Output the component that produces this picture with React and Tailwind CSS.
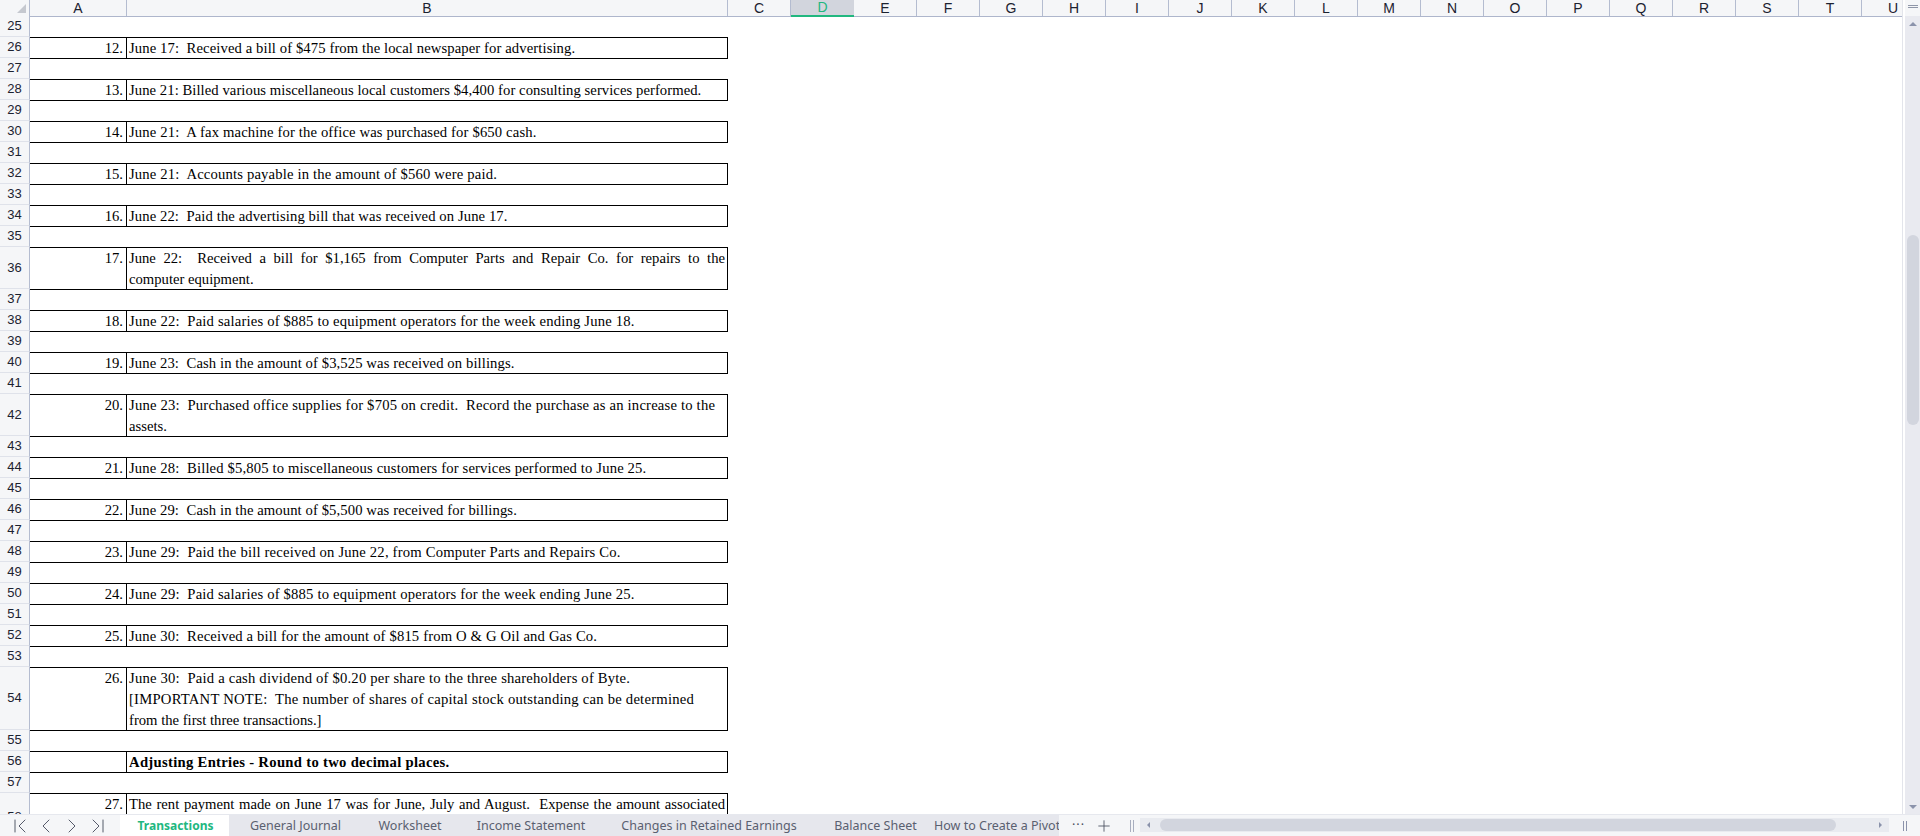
import { ChevronFirst, ChevronLast, ChevronLeft, ChevronRight, Plus } from 'lucide-react';

const columns = ['C', 'D', 'E', 'F', 'G', 'H', 'I', 'J', 'K', 'L', 'M', 'N', 'O', 'P', 'Q', 'R', 'S', 'T', 'U'];

// each line: [text, tracking class]
const entries = [
  { row: 26, num: '12.', lines: [['June 17:  Received a bill of $475 from the local newspaper for advertising.', 'tracking-[0.1px]']] },
  { row: 28, num: '13.', lines: [['June 21: Billed various miscellaneous local customers $4,400 for consulting services performed.', 'tracking-[0.065px]']] },
  { row: 30, num: '14.', lines: [['June 21:  A fax machine for the office was purchased for $650 cash.', 'tracking-[0.146px]']] },
  { row: 32, num: '15.', lines: [['June 21:  Accounts payable in the amount of $560 were paid.', 'tracking-[0.166px]']] },
  { row: 34, num: '16.', lines: [['June 22:  Paid the advertising bill that was received on June 17.', 'tracking-[0.094px]']] },
  { row: 36, num: '17.', justify: true, lines: [['June 22:  Received a bill for $1,165 from Computer Parts and Repair Co. for repairs to the', ''], ['computer equipment.', '']] },
  { row: 38, num: '18.', lines: [['June 22:  Paid salaries of $885 to equipment operators for the week ending June 18.', 'tracking-[0.177px]']] },
  { row: 40, num: '19.', lines: [['June 23:  Cash in the amount of $3,525 was received on billings.', 'tracking-[0.095px]']] },
  { row: 42, num: '20.', lines: [['June 23:  Purchased office supplies for $705 on credit.  Record the purchase as an increase to the', 'tracking-[0.19px]'], ['assets.', '']] },
  { row: 44, num: '21.', lines: [['June 28:  Billed $5,805 to miscellaneous customers for services performed to June 25.', 'tracking-[0.144px]']] },
  { row: 46, num: '22.', lines: [['June 29:  Cash in the amount of $5,500 was received for billings.', 'tracking-[0.094px]']] },
  { row: 48, num: '23.', lines: [['June 29:  Paid the bill received on June 22, from Computer Parts and Repairs Co.', 'tracking-[0.186px]']] },
  { row: 50, num: '24.', lines: [['June 29:  Paid salaries of $885 to equipment operators for the week ending June 25.', 'tracking-[0.177px]']] },
  { row: 52, num: '25.', lines: [['June 30:  Received a bill for the amount of $815 from O & G Oil and Gas Co.', 'tracking-[0.147px]']] },
  { row: 54, num: '26.', lines: [['June 30:  Paid a cash dividend of $0.20 per share to the three shareholders of Byte.', 'tracking-[0.19px]'], ['[IMPORTANT NOTE:  The number of shares of capital stock outstanding can be determined', 'tracking-[0.228px]'], ['from the first three transactions.]', '']] },
  { row: 56, num: '', bold: true, lines: [['Adjusting Entries - Round to two decimal places.', 'tracking-[0.3px]']] },
  { row: 58, num: '27.', justify: true, h: 'h-[48px]', lines: [['The rent payment made on June 17 was for June, July and August.  Expense the amount associated', '']] },
];

const tabs = [
  { name: 'General Journal', cls: 'w-[129px]' },
  { name: 'Worksheet', cls: 'w-[100px]' },
  { name: 'Income Statement', cls: 'w-[142px]' },
  { name: 'Changes in Retained Earnings', cls: 'w-[214px]' },
  { name: 'Balance Sheet', cls: 'w-[119px]' },
];

const RowNumber = ({ n, h }) => (
  <div className={`${h} w-[30px] shrink-0 flex items-center justify-center bg-[#f5f6f8] border-r border-b border-r-[#b4bcd0] border-b-[#dfe2ea] font-['Liberation_Sans',sans-serif] text-[13px] text-[#1c2230]`}>
    {n}
  </div>
);

const BlankRow = ({ n, line }) => (
  <div className="flex">
    <RowNumber n={n} h="h-[21px]" />
    <div className={`w-[698px] h-[21px] ${line ? 'border-t border-black' : ''}`} />
  </div>
);

const EntryRow = ({ entry }) => {
  const heights = { 1: 'h-[21px]', 2: 'h-[42px]', 3: 'h-[63px]' };
  const h = entry.h || heights[entry.lines.length];
  return (
    <div className="flex">
      <RowNumber n={entry.row} h={h} />
      <div className={`${h} w-[96px] shrink-0 border-t border-black text-right pr-[3px] text-[14.67px] leading-[20px]`}>{entry.num}</div>
      <div className={`${h} w-[602px] shrink-0 border-t border-x border-black pl-[2px] pr-[2px] text-[14.67px] leading-[21px] ${entry.bold ? 'font-bold' : ''}`}>
        {entry.lines.map(([line, track], i) => (
          <div
            key={i}
            className={`h-[21px] ${track} ${entry.justify && i === 0 ? 'whitespace-pre-wrap [text-align:justify] [text-align-last:justify]' : 'whitespace-pre'}`}
          >
            {line}
          </div>
        ))}
      </div>
    </div>
  );
};

export default function App() {
  return (
    <div className="h-[836px] w-[1920px] overflow-hidden flex flex-col bg-white font-['Liberation_Sans',sans-serif]">
      <div className="flex-1 min-h-0 flex">
        {/* grid */}
        <div className="w-[1903px] shrink-0 overflow-hidden border-r border-[#e3e5eb]">
          {/* column header */}
          <div className="flex h-[17px] bg-[#f5f6f8] border-b border-[#aeb6cc] text-[14px] text-[#1c2230]">
            <div className="w-[30px] shrink-0 border-r border-[#b4bcd0] relative">
              <div className="absolute right-[3px] bottom-[3px] w-0 h-0 border-l-[9px] border-b-[9px] border-l-transparent border-b-[#c5c8cf]" />
            </div>
            <div className="w-[97px] shrink-0 border-r border-[#b4bcd0] flex items-center justify-center">A</div>
            <div className="w-[601px] shrink-0 border-r border-[#b4bcd0] flex items-center justify-center">B</div>
            {columns.map((c) => (
              <div
                key={c}
                className={`w-[63px] shrink-0 flex items-center justify-center ${c === 'D' ? 'bg-[#d2d5dd] text-[#21b77f] border-b-2 border-[#21b77f] h-[17px]' : 'border-r border-[#b4bcd0]'}`}
              >
                {c}
              </div>
            ))}
          </div>
          {/* rows */}
          <div className="font-['Liberation_Serif',serif] text-black -mt-px">
            <BlankRow n={25} />
            {entries.map((entry, i) => (
              <div key={entry.row}>
                <EntryRow entry={entry} />
                {i < entries.length - 1 && (
                  <BlankRow n={entry.row + 1} line />
                )}
              </div>
            ))}
          </div>
        </div>
        {/* vertical scrollbar */}
        <div className="flex-1 bg-[#e9eaf0] flex flex-col items-center border-l-2 border-white">
          <div className="h-[16px] w-full bg-[#f5f6f8] flex flex-col items-center pt-[5px] gap-[1px]">
            <div className="w-[10px] h-px bg-[#8f96a8]" />
            <div className="w-[10px] h-px bg-[#8f96a8]" />
          </div>
          <div className="mt-[6px] w-0 h-0 border-x-[4px] border-b-[4px] border-x-transparent border-b-[#8b93ab]" />
          <div className="mt-[209px] w-[12px] h-[190px] rounded-full bg-[#d2d5de]" />
          <div className="mt-auto mb-[5px] w-0 h-0 border-x-[4px] border-t-[4px] border-x-transparent border-t-[#8b93ab]" />
        </div>
      </div>

      {/* sheet tabs */}
      <div className="h-[22px] shrink-0 flex bg-[#f5f6f8] border-t border-[#e6e8ee] font-['Noto_Sans',sans-serif] text-[12.5px] text-[#5a6070]">
        <div className="w-[120px] shrink-0 flex items-center pl-[8px] gap-[2px] text-[#444a5a]">
          <ChevronFirst size={24} strokeWidth={0.9} />
          <ChevronLeft size={24} strokeWidth={0.9} />
          <ChevronRight size={24} strokeWidth={0.9} />
          <ChevronLast size={24} strokeWidth={0.9} />
        </div>
        <div className="w-[109px] shrink-0 bg-white flex items-center justify-center pl-[2px] pt-px font-bold text-[12px] text-[#21b77f]">Transactions</div>
        <div className="w-[830px] shrink-0 flex items-center pl-[2px] pt-px bg-[#e6e7ed] overflow-hidden">
          {tabs.map((t) => (
            <div key={t.name} className={`${t.cls} shrink-0 text-center whitespace-nowrap`}>{t.name}</div>
          ))}
          <div className="shrink-0 whitespace-nowrap -ml-[1px]">How to Create a Pivot</div>
        </div>
        <div className="w-[71px] shrink-0 flex items-center pl-[13px] gap-[10px] text-[#444a5a]">
          <span className="leading-none tracking-[1px]">···</span>
          <Plus size={18} strokeWidth={1.1} />
        </div>
        <div className="w-[10px] shrink-0 flex items-center gap-[2px]">
          <div className="w-px h-[12px] bg-[#a8aebf]" />
          <div className="w-px h-[12px] bg-[#a8aebf]" />
        </div>
        <div className="w-[749px] shrink-0 h-[14px] mt-[3px] bg-[#e9ebf0] flex items-center pl-[7px]">
          <div className="w-0 h-0 border-y-[3px] border-r-[3px] border-y-transparent border-r-[#8b93ab]" />
          <div className="ml-[10px] w-[676px] h-[12px] rounded-full bg-[#d2d5de]" />
          <div className="ml-[43px] w-0 h-0 border-y-[3px] border-l-[3px] border-y-transparent border-l-[#8b93ab]" />
        </div>
        <div className="flex-1 flex items-center justify-center gap-[2px]">
          <div className="w-px h-[10px] bg-[#8b93ab]" />
          <div className="w-px h-[10px] bg-[#8b93ab]" />
        </div>
      </div>
    </div>
  );
}
